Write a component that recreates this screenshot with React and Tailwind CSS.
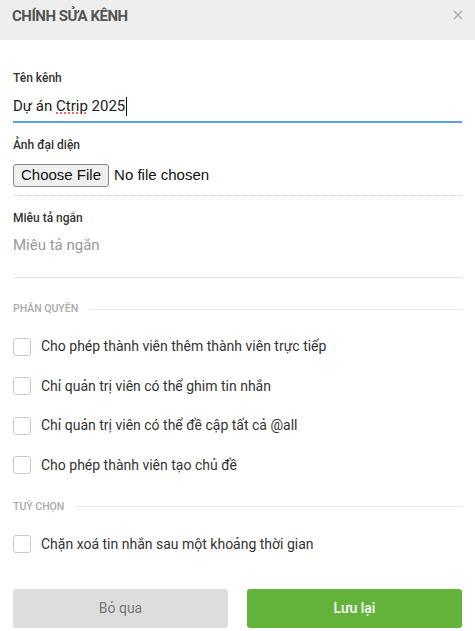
import React from "react";

function Checkbox({ label }) {
  return (
    <label className="flex h-[39.5px] items-center gap-[10px]">
      <span className="block h-[18px] w-[18px] shrink-0 rounded-[3px] border border-[#c9c9c9] bg-white" />
      <span className="text-[14px] text-[#333]">{label}</span>
    </label>
  );
}

function Section({ title }) {
  return (
    <div className="flex h-4 items-center gap-3">
      <span className="text-[10.5px] font-medium uppercase text-[#aaa]">{title}</span>
      <span className="h-px flex-1 bg-[#e6e6e6]" />
    </div>
  );
}

export default function App() {
  return (
    <div className="h-[631px] w-[475px] overflow-hidden bg-white" style={{ fontFamily: "Roboto, 'Noto Sans', sans-serif" }}>
      <div className="flex h-10 items-start justify-between bg-[#eeeeee] pl-3 pr-[12px] pt-[5px]">
        <h1 className="text-[15px] font-bold leading-[22px] tracking-[-0.5px] text-[#555]">CHÍNH SỬA KÊNH</h1>
        <svg className="mt-[5px]" width="10" height="10" viewBox="0 0 10 10" fill="none" stroke="#aaa" strokeWidth="1.3">
          <path d="M1 1L9 9M9 1L1 9" />
        </svg>
      </div>

      <div className="px-[13px] pt-[30px]">
        <div className="text-[12px] font-medium leading-4 text-[#333]">Tên kênh</div>
        <div className="mt-[5px] flex h-[32px] items-center border-b-2 border-[#5d9de8] text-[15px] text-[#222]">
          <span>Dự án <span className="underline decoration-dotted decoration-[#e33] underline-offset-2">Ctrip</span> 2025</span>
          <span className="ml-px h-[19px] w-px bg-[#111]" />
        </div>

        <div className="mt-[14px] text-[12px] font-medium leading-4 text-[#333]">Ảnh đại diện</div>
        <div className="mt-[11px] flex items-center border-b border-dotted border-[#d5d5d5] pb-[8px]" style={{ fontFamily: "'Liberation Sans', Arial, sans-serif" }}>
          <span className="flex h-[23px] items-center rounded-[3px] border border-[#8a8a8a] bg-[#efefef] px-[7px] text-[15px] text-[#111]">Choose File</span>
          <span className="ml-[5px] text-[15px] text-[#111]">No file chosen</span>
        </div>

        <div className="mt-[14px] text-[12px] font-medium leading-4 text-[#333]">Miêu tả ngắn</div>
        <div className="mt-[9px] h-[43px] border-b border-[#e3e3e3] text-[15px] leading-5 text-[#999]">Miêu tả ngắn</div>

        <div className="mt-[23px]">
          <Section title="Phân quyền" />
        </div>
        <div className="mt-[10px]">
          <Checkbox label="Cho phép thành viên thêm thành viên trực tiếp" />
          <Checkbox label="Chỉ quản trị viên có thể ghim tin nhắn" />
          <Checkbox label="Chỉ quản trị viên có thể đề cập tất cả @all" />
          <Checkbox label="Cho phép thành viên tạo chủ đề" />
        </div>

        <div className="mt-[13.5px]">
          <Section title="Tuỳ chọn" />
        </div>
        <div className="mt-[10px]">
          <Checkbox label="Chặn xoá tin nhắn sau một khoảng thời gian" />
        </div>

        <div className="mt-[25px] flex gap-[19px]">
          <button className="h-[39px] flex-1 rounded-[3px] bg-[#dddddd] text-[14px] text-[#777]">Bỏ qua</button>
          <button className="h-[39px] flex-1 rounded-[3px] bg-[#63b33b] text-[14px] font-medium text-white">Lưu lại</button>
        </div>
      </div>
    </div>
  );
}
